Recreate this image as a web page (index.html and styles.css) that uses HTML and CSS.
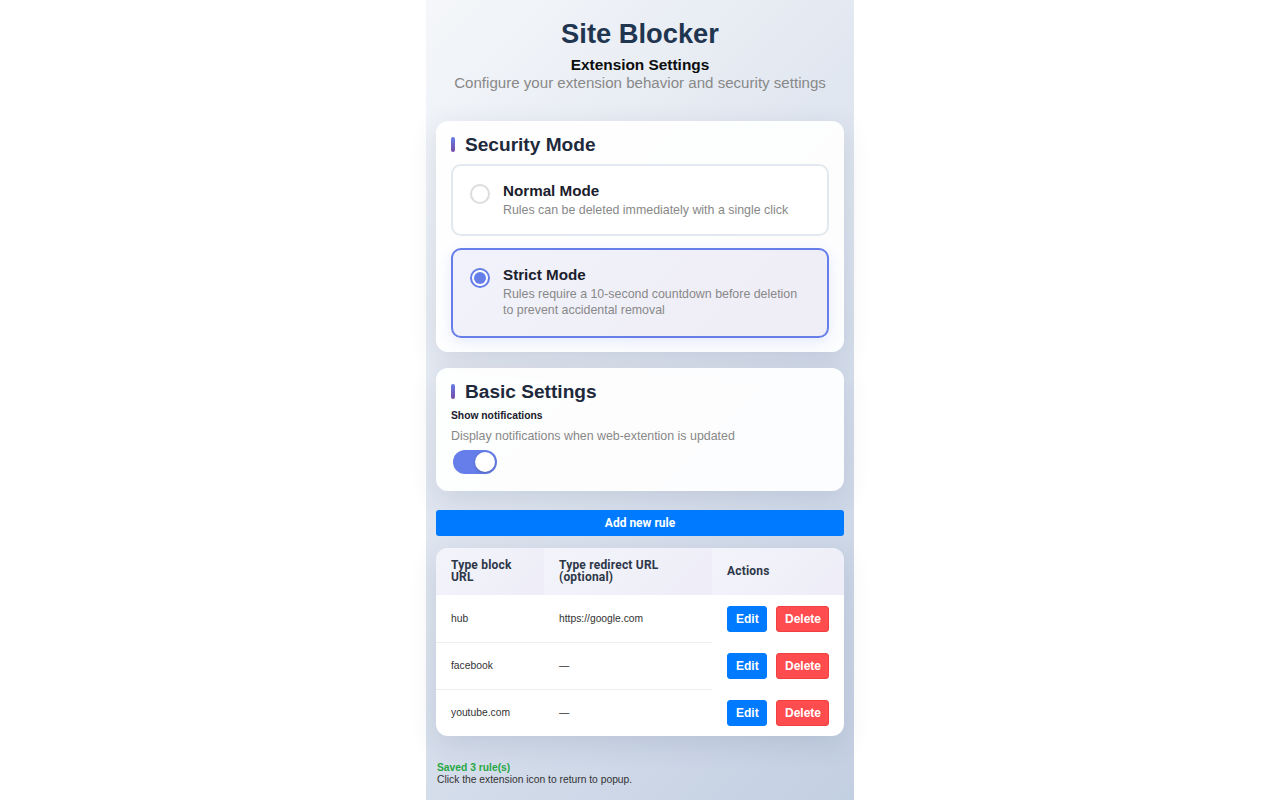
FILE: index.html
```html
<!DOCTYPE html>
<html lang="en">
<head>
<meta charset="utf-8">
<title>Site Blocker - Settings</title>
<link rel="stylesheet" href="styles.css">
</head>
<body>
<div class="page">
  <header class="header">
    <h1 class="title">Site Blocker</h1>
    <h2 class="subtitle">Extension Settings</h2>
    <p class="lead">Configure your extension behavior and security settings</p>
  </header>

  <section class="card">
    <h3 class="card-title">Security Mode</h3>
    <div class="options">
      <label class="option">
        <span class="radio"></span>
        <span class="option-body">
          <span class="option-title">Normal Mode</span>
          <span class="option-desc">Rules can be deleted immediately with a single click</span>
        </span>
      </label>
      <label class="option option-active">
        <span class="radio radio-checked"></span>
        <span class="option-body">
          <span class="option-title">Strict Mode</span>
          <span class="option-desc">Rules require a 10-second countdown before deletion to prevent accidental removal</span>
        </span>
      </label>
    </div>
  </section>

  <section class="card card-basic">
    <h3 class="card-title">Basic Settings</h3>
    <div class="setting-label">Show notifications</div>
    <div class="setting-desc">Display notifications when web-extention is updated</div>
    <div class="toggle"><span class="knob"></span></div>
  </section>

  <button class="add-btn">Add new rule</button>

  <div class="table-card">
    <table class="rules">
      <colgroup>
        <col class="c1"><col class="c2"><col class="c3">
      </colgroup>
      <thead>
        <tr><th>Type block URL</th><th>Type redirect URL (optional)</th><th>Actions</th></tr>
      </thead>
      <tbody>
        <tr><td>hub</td><td>https://google.com</td><td><div class="actions"><button class="btn btn-edit">Edit</button><button class="btn btn-del">Delete</button></div></td></tr>
        <tr><td>facebook</td><td>—</td><td><div class="actions"><button class="btn btn-edit">Edit</button><button class="btn btn-del">Delete</button></div></td></tr>
        <tr><td>youtube.com</td><td>—</td><td><div class="actions"><button class="btn btn-edit">Edit</button><button class="btn btn-del">Delete</button></div></td></tr>
      </tbody>
    </table>
  </div>

  <div class="footer">
    <div class="status">Saved 3 rule(s)</div>
    <div class="hint">Click the extension icon to return to popup.</div>
  </div>
</div>
</body>
</html>
```

FILE: styles.css
```css
* { box-sizing: border-box; }

html, body {
  margin: 0;
  padding: 0;
  background: #ffffff;
}

body {
  font-family: "Liberation Sans", Arial, sans-serif;
}

.page {
  width: 428px;
  min-height: 800px;
  margin: 0 auto;
  padding: 0 10px;
  background: linear-gradient(135deg, #f5f7fa 0%, #c3cfe2 100%);
  display: flex;
  flex-direction: column;
}

.header {
  text-align: center;
  padding-top: 17px;
}

.title {
  margin: 0;
  font-size: 27.3px;
  line-height: 34px;
  font-weight: 700;
  color: #1f3550;
}

.subtitle {
  margin: 5px 0 0;
  font-size: 15.4px;
  line-height: 18px;
  font-weight: 700;
  color: #0d0d0d;
}

.lead {
  margin: 0;
  font-size: 15.1px;
  line-height: 18px;
  color: #888;
}

.card {
  margin-top: 29px;
  background: rgba(255, 255, 255, 0.93);
  border-radius: 12px;
  padding: 12px 15px 14px;
  box-shadow: 0 8px 28px rgba(40, 60, 100, 0.12);
}

.card-basic {
  margin-top: 16px;
  padding-bottom: 17px;
}

.card-title {
  margin: 0 0 8px;
  font-size: 19.1px;
  line-height: 23px;
  font-weight: 700;
  color: #1e293b;
  display: flex;
  align-items: center;
  gap: 10px;
}

.card-basic .card-title {
  margin-bottom: 6px;
}

.card-title::before {
  content: "";
  width: 4px;
  height: 15px;
  border-radius: 2px;
  background: linear-gradient(180deg, #667eea, #764ba2);
}

.options {
  display: flex;
  flex-direction: column;
  gap: 12px;
}

.option {
  display: flex;
  align-items: flex-start;
  gap: 13px;
  padding: 16px 17px 16px;
  border: 2px solid #e2e8f0;
  border-radius: 10px;
  background: #fff;
}

.option-active {
  border-color: #667eea;
  padding-bottom: 18px;
  background: linear-gradient(135deg, #f1f2fb 0%, #efedf6 100%);
  box-shadow: 0 4px 14px rgba(102, 126, 234, 0.15);
}

.radio {
  flex: none;
  width: 20px;
  height: 20px;
  margin-top: 2px;
  border: 2px solid #dcdcdc;
  border-radius: 50%;
  background: #fff;
  display: flex;
  align-items: center;
  justify-content: center;
}

.radio-checked {
  border-color: #667eea;
}

.radio-checked::after {
  content: "";
  width: 12px;
  height: 12px;
  border-radius: 50%;
  background: #667eea;
}

.option-body {
  display: flex;
  flex-direction: column;
}

.option-title {
  font-size: 15.2px;
  line-height: 18px;
  font-weight: 700;
  color: #1a202c;
}

.option-desc {
  margin-top: 2px;
  font-size: 12.4px;
  line-height: 16px;
  color: #888;
}

.setting-label {
  font-size: 10.3px;
  line-height: 13px;
  font-weight: 700;
  color: #1a202c;
}

.setting-desc {
  margin-top: 6px;
  font-size: 12.4px;
  line-height: 16px;
  color: #888;
}

.toggle {
  margin: 6px 0 0 2px;
  width: 44px;
  height: 24px;
  border-radius: 12px;
  background: #667eea;
  display: flex;
  align-items: center;
  justify-content: flex-end;
  padding: 0 2px;
}

.knob {
  width: 20px;
  height: 20px;
  border-radius: 50%;
  background: #fff;
  box-shadow: 0 1px 3px rgba(0, 0, 0, 0.25);
}

.add-btn {
  margin-top: 19px;
  height: 26px;
  width: 100%;
  border: none;
  border-radius: 3px;
  background: #007bff;
  color: #fff;
  font-family: Roboto, "Liberation Sans", sans-serif;
  font-size: 12px;
  font-weight: 700;
  padding: 0;
}

.table-card {
  margin-top: 12px;
  background: #fff;
  border-radius: 12px;
  overflow: hidden;
  box-shadow: 0 8px 28px rgba(40, 60, 100, 0.12);
}

.rules {
  width: 100%;
  border-collapse: collapse;
  table-layout: fixed;
}

.c1 { width: 108px; }
.c2 { width: 168px; }
.c3 { width: 132px; }

.rules th {
  text-align: left;
  padding: 11px 15px 12px 15px;
  font-family: Roboto, "Liberation Sans", sans-serif;
  font-size: 12px;
  line-height: 12px;
  font-weight: 700;
  letter-spacing: 0.2px;
  color: #2d3748;
  background: linear-gradient(135deg, #f3f4fa 0%, #eeedf8 100%);
  height: 47px;
}

.rules td {
  padding: 10px 15px;
  font-size: 10.3px;
  line-height: 13px;
  color: #333;
  vertical-align: middle;
  height: 47px;
}

.rules tbody tr:not(:last-child) td:not(:last-child) {
  border-bottom: 1px solid #eeeeee;
}

.rules td:last-child {
  padding: 0 15px;
}

.actions {
  display: flex;
  gap: 9px;
}

.btn {
  height: 26px;
  padding: 0 8px;
  border-radius: 3px;
  font-family: "Liberation Sans", Arial, sans-serif;
  font-size: 12px;
  font-weight: 700;
  color: #fff;
}

.btn-edit {
  background: #007bff;
  border: 1px solid #007bff;
  width: 40px;
}

.btn-del {
  background: #ff4d4f;
  border: 1px solid #f04040;
  width: 53px;
}

.footer {
  margin-top: 26px;
  padding-left: 1px;
  font-size: 10.3px;
  line-height: 12px;
}

.status {
  color: #28a745;
  font-weight: 700;
}

.hint {
  color: #333;
}
```
